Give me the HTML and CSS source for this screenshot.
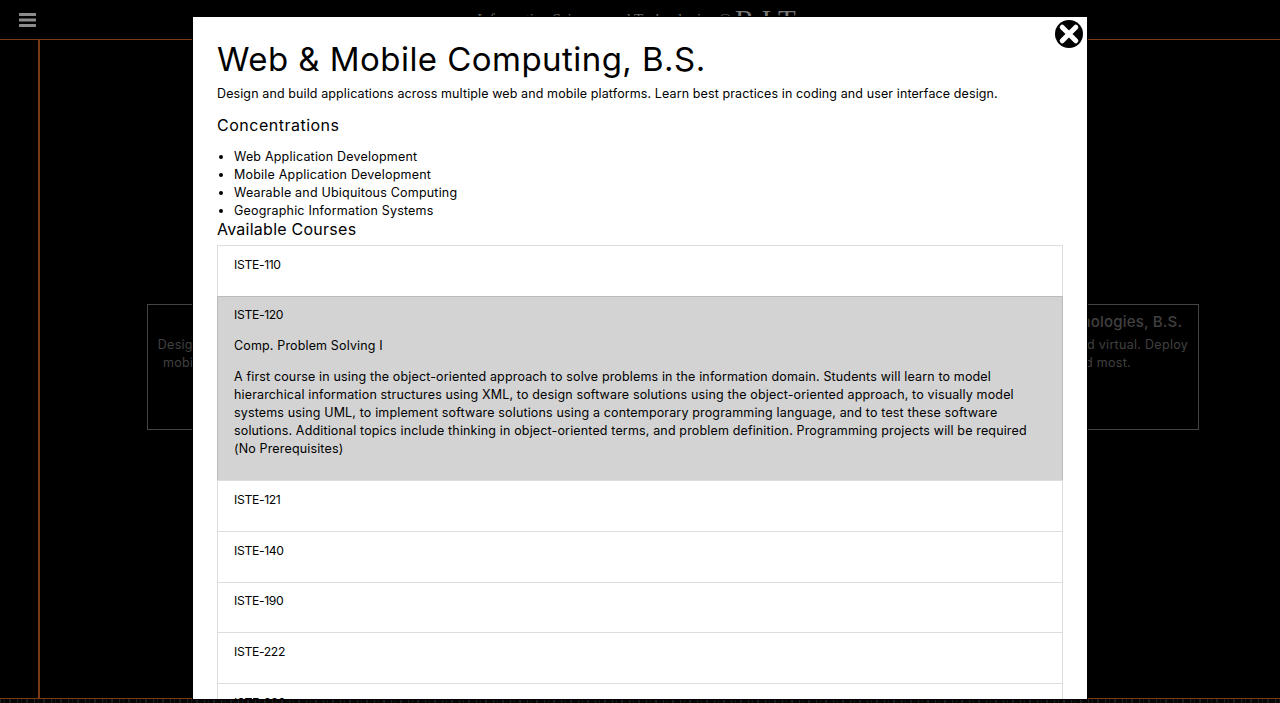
FILE: index.html
```html
<!DOCTYPE html>
<html lang="en">
<head>
<meta charset="utf-8">
<title>Web &amp; Mobile Computing, B.S.</title>
<link rel="stylesheet" href="styles.css">
</head>
<body>
<div class="page">
  <header class="topbar">
    <svg class="menu" viewBox="0 0 17 14" width="17" height="14"><rect width="17" height="3" rx=".5"/><rect y="5.5" width="17" height="3" rx=".5"/><rect y="11" width="17" height="3" rx=".5"/></svg>
    <div class="brand"><span class="brand-small">Information Sciences and Technologies @</span> <span class="brand-rit">RIT</span></div>
  </header>
  <main class="stage">
    <div class="rail"></div>
    <div class="cards">
      <section class="card">
        <h3>Web &amp; Mobile Computing, B.S.</h3>
        <p>Design and build applications across multiple web and<br>mobile platforms. Learn best practices in coding and<br>user interface design.</p>
      </section>
      <section class="card">
        <h3>Computing &amp; Information Technologies, B.S.</h3>
        <p>Run and secure networks, physical and virtual. Deploy<br>the services that people need most.</p>
      </section>
    </div>
  </main>
  <div class="strip"></div>
</div>

<div class="modal">
  <svg class="close" viewBox="0 0 30 30" width="30" height="30">
    <circle cx="15" cy="15" r="14" fill="#000"/>
    <path d="M8.2 8.2 L21.8 21.8 M21.8 8.2 L8.2 21.8" stroke="#fff" stroke-width="5" stroke-linecap="round"/>
  </svg>
  <h1>Web &amp; Mobile Computing, B.S.</h1>
  <p class="lead">Design and build applications across multiple web and mobile platforms. Learn best practices in coding and user interface design.</p>
  <h2 class="conc">Concentrations</h2>
  <ul>
    <li>Web Application Development</li>
    <li>Mobile Application Development</li>
    <li>Wearable and Ubiquitous Computing</li>
    <li>Geographic Information Systems</li>
  </ul>
  <h2 class="avail">Available Courses</h2>
  <div class="courses">
    <div class="course"><p class="code">ISTE-110</p></div>
    <div class="course open">
      <p class="code">ISTE-120</p>
      <p>Comp. Problem Solving I</p>
      <p>A first course in using the object-oriented approach to solve problems in the information domain. Students will learn to model hierarchical information structures using XML, to design software solutions using the object-oriented approach, to visually model systems using UML, to implement software solutions using a contemporary programming language, and to test these software solutions. Additional topics include thinking in object-oriented terms, and problem definition. Programming projects will be required (No Prerequisites)</p>
    </div>
    <div class="course"><p class="code">ISTE-121</p></div>
    <div class="course"><p class="code">ISTE-140</p></div>
    <div class="course"><p class="code">ISTE-190</p></div>
    <div class="course"><p class="code">ISTE-222</p></div>
    <div class="course"><p class="code">ISTE-230</p></div>
  </div>
</div>
</body>
</html>
```
FILE: styles.css
```css
* { box-sizing: border-box; }
html, body { margin: 0; height: 100%; overflow: hidden; background: #000; }
body { font-family: Inter, "Noto Sans", sans-serif; color: #000; }

.page { height: 703px; display: flex; flex-direction: column; }

.topbar { height: 40px; flex: none; border-bottom: 1px solid #7a3b12; display: flex; align-items: flex-start; padding: 13px 0 0 19px; overflow: hidden; }
.menu { fill: #8c8c8c; flex: none; }
.brand { flex: 1; text-align: center; padding-right: 36px; margin-top: -9px; color: #777; white-space: nowrap; font-family: "Liberation Serif", serif; font-size: 15px; }
.brand-small { vertical-align: 6px; color: #666; }
.brand-rit { font-size: 29px; letter-spacing: 7px; }

.stage { flex: 1; display: flex; border-bottom: 1px solid #7a3b12; min-height: 0; }
.rail { width: 2px; margin-left: 38px; background: #7a3b12; flex: none; }
.cards { flex: 1; display: flex; justify-content: space-between; padding: 264px 81px 0 107px; }
.card { width: 358px; height: 126px; border: 1px solid #444; color: #404040; text-align: center; padding: 7px 8px; overflow: hidden; white-space: nowrap; }
.card h3 { margin: 0 0 4px; font-size: 15px; font-weight: 500; line-height: 20px; letter-spacing: .2px; }
.card p { margin: 0; font-size: 12.5px; line-height: 18px; letter-spacing: .3px; }

.strip { height: 4px; flex: none; background: #050505 repeating-linear-gradient(90deg, #1e2022 0 1px, #070707 1px 4px, #141414 4px 5px, #050505 5px 9px, #1a1c1e 9px 11px, #060606 11px 17px); }

.modal { position: absolute; left: 193px; top: 17px; width: 894px; height: 682px; background: #fff; overflow: hidden; padding: 23px 24px 0; box-shadow: 0 0 0 1px #000; }
.close { position: absolute; right: 3px; top: 2px; }
.modal h1 { margin: 0; font-size: 33px; font-weight: 400; line-height: 38px; letter-spacing: .45px; }
.lead { margin: 7px 0 0; font-size: 12.5px; line-height: 18px; letter-spacing: .11px; }
h2 { font-weight: 400; font-size: 16px; margin: 0; line-height: 19px; }
.conc { margin-top: 13px; letter-spacing: .5px; }
.avail { letter-spacing: .25px; }
ul { margin: 13px 0 0; padding: 0 0 0 17px; font-size: 12.5px; line-height: 18px; letter-spacing: .2px; }
.courses { margin-top: 6px; font-size: 12.5px; line-height: 18px; letter-spacing: .15px; }
.course { border: 1px solid #ddd; margin-top: -1px; padding: 9.6px 20px 0 16px; height: 51.7px; }
.courses .course:first-child { margin-top: 0; padding-top: 10px; }
.course p { margin: 0; }
.course p + p { margin-top: 13px; }
.course .code { font-size: 12.2px; letter-spacing: -.35px; }
.course.open { background: #d3d3d3; border-color: #bbb; height: 185.7px; padding-top: 9.5px; }
```
